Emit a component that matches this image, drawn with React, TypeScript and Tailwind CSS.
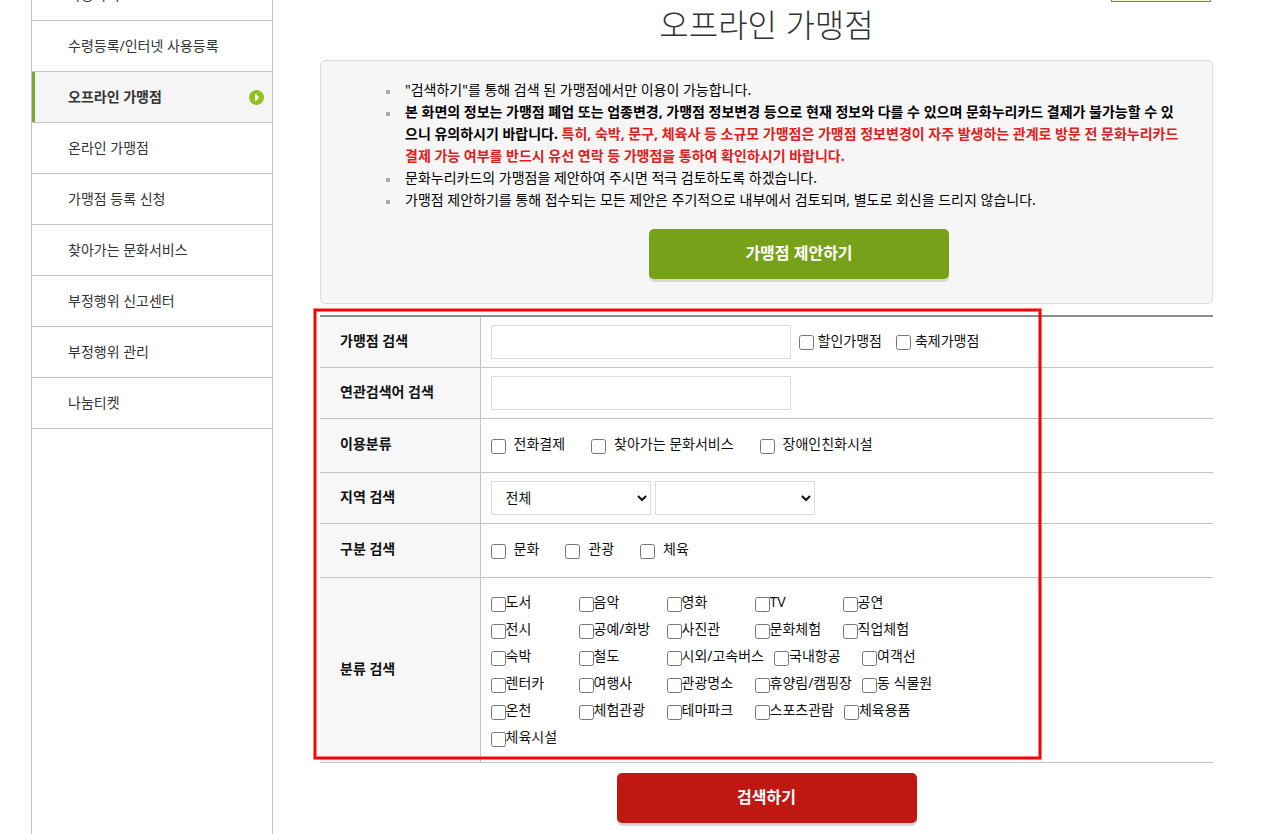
import React from 'react';

const MENU = [
    '사용하기',
    '수령등록/인터넷 사용등록',
    '오프라인 가맹점',
    '온라인 가맹점',
    '가맹점 등록 신청',
    '찾아가는 문화서비스',
    '부정행위 신고센터',
    '부정행위 관리',
    '나눔티켓',
];

const CATEGORIES = [
    ['도서', '음악', '영화', 'TV', '공연'],
    ['전시', '공예/화방', '사진관', '문화체험', '직업체험'],
    ['숙박', '철도', '시외/고속버스', '국내항공', '여객선'],
    ['렌터카', '여행사', '관광명소', '휴양림/캠핑장', '동 식물원'],
    ['온천', '체험관광', '테마파크', '스포츠관람', '체육용품'],
    ['체육시설'],
];

const ArrowBadge = () => (
    <svg viewBox="0 0 15 15" className="h-[15px] w-[15px]" aria-hidden="true">
        <circle cx="7.5" cy="7.5" r="7.5" fill="#8dc21f" />
        <path d="M6 4h1l3.2 3.5L7 11H6z" fill="#fff" />
    </svg>
);

const Check = ({ label, className }: { label: string; className: string }) => (
    <label className={`flex items-center whitespace-nowrap ${className}`}>
        <input type="checkbox" className="mt-1 h-[15px] w-[15px] shrink-0" />
        <span>{label}</span>
    </label>
);

const Row = ({ title, htmlFor, className, children }: { title: string; htmlFor?: string; className: string; children: React.ReactNode }) => (
    <tr className={`border-b border-[#c4c4c4] ${className}`}>
        <th scope="row" className="w-40 border-r border-[#c4c4c4] bg-[#f7f7f7] pb-[2px] pl-5 text-left font-bold">
            {htmlFor ? <label htmlFor={htmlFor}>{title}</label> : title}
        </th>
        <td className="px-[10px]">{children}</td>
    </tr>
);

const Notice = ({ children }: { children: React.ReactNode }) => (
    <li className="flex gap-[15px]">
        <span className="mt-[11px] h-1 w-1 shrink-0 bg-[#aaa]" />
        <div>{children}</div>
    </li>
);

export default function App() {
    return (
        <div className="relative flex h-screen overflow-hidden bg-white pr-[53px] pl-[31px] font-['Noto_Sans','Noto_Sans_CJK_KR',sans-serif] text-sm text-[#111]">
            <nav className="w-[242px] shrink-0 border-x border-[#c4c4c4] text-[#333]">
                <ul className="-mt-[30px]">
                    {MENU.map((item) => {
                        const active = item === '오프라인 가맹점';
                        return (
                            <li key={item} className="h-[51px] border-b border-[#c4c4c4]">
                                <a
                                    href="#"
                                    className={active
                                        ? 'flex h-full items-center justify-between border-l-[3px] border-[#82a736] bg-[#f5f5f5] pr-2 pl-[33px] font-bold'
                                        : 'flex h-full items-center pl-9'}
                                >
                                    <span className="pb-px">{item}</span>
                                    {active && <ArrowBadge />}
                                </a>
                            </li>
                        );
                    })}
                </ul>
            </nav>

            <main className="ml-[47px] min-w-0 flex-1">
                <h1 className="h-[60px] text-center text-[32px] leading-[50px] font-light text-[#333]">오프라인 가맹점</h1>

                <section className="rounded-[5px] border border-[#dcdcdc] bg-[#f6f6f6] pt-[18px] pr-7 pb-6 pl-[65px] text-black">
                    <ul className="list-none leading-[22px] break-all">
                        <Notice>"검색하기"를 통해 검색 된 가맹점에서만 이용이 가능합니다.</Notice>
                        <Notice>
                            <strong className="font-bold">
                                본 화면의 정보는 가맹점 폐업 또는 업종변경, 가맹점 정보변경 등으로 현재 정보와 다를 수 있으며 문화누리카드 결제가 불가능할 수 있으니 유의하시기 바랍니다.{' '}
                                <span className="text-[#e02020]">
                                    특히, 숙박, 문구, 체육사 등 소규모 가맹점은 가맹점 정보변경이 자주 발생하는 관계로 방문 전 문화누리카드 결제 가능 여부를 반드시 유선 연락 등 가맹점을 통하여 확인하시기 바랍니다.
                                </span>
                            </strong>
                        </Notice>
                        <Notice>문화누리카드의 가맹점을 제안하여 주시면 적극 검토하도록 하겠습니다.</Notice>
                        <Notice>가맹점 제안하기를 통해 접수되는 모든 제안은 주기적으로 내부에서 검토되며, 별도로 회신을 드리지 않습니다.</Notice>
                    </ul>
                    <div className="mt-[18px] flex justify-center pl-7">
                        <button type="button" className="h-[50px] w-[300px] rounded-[5px] bg-[#78a11a] pb-[2px] text-base font-bold text-white shadow-[0_3px_0_#d8d8da]">
                            가맹점 제안하기
                        </button>
                    </div>
                </section>

                <form>
                    <table className="mt-[11px] w-full border-collapse border-t-2 border-[#8b908f]">
                        <tbody>
                            <Row title="가맹점 검색" htmlFor="store" className="h-[51px]">
                                <div className="flex items-center">
                                    <input id="store" type="text" className="h-[34px] w-[300px] border border-[#dcdcdc] bg-white px-3" />
                                    <Check label="할인가맹점" className="ml-2 gap-1 pb-[2px]" />
                                    <Check label="축제가맹점" className="ml-[14px] gap-1 pb-[2px]" />
                                </div>
                            </Row>
                            <Row title="연관검색어 검색" htmlFor="keyword" className="h-[51px]">
                                <input id="keyword" type="text" className="block h-[34px] w-[300px] border border-[#dcdcdc] bg-white px-3" />
                            </Row>
                            <Row title="이용분류" className="h-[54px]">
                                <div className="flex gap-[26px] pb-[2px]">
                                    <Check label="전화결제" className="gap-2" />
                                    <Check label="찾아가는 문화서비스" className="gap-2" />
                                    <Check label="장애인친화시설" className="gap-2" />
                                </div>
                            </Row>
                            <Row title="지역 검색" htmlFor="sido" className="h-[51px]">
                                <div className="flex gap-1">
                                    <select id="sido" className="h-[34px] w-[160px] border border-[#dcdcdc] bg-white px-[10px]">
                                        <option>전체</option>
                                    </select>
                                    <select aria-label="시군구" className="h-[34px] w-[160px] border border-[#dcdcdc] bg-white px-[10px]" />
                                </div>
                            </Row>
                            <Row title="구분 검색" className="h-[54px]">
                                <div className="flex gap-[26px] pb-[2px]">
                                    <Check label="문화" className="gap-2" />
                                    <Check label="관광" className="gap-2" />
                                    <Check label="체육" className="gap-2" />
                                </div>
                            </Row>
                            <Row title="분류 검색" className="h-[185px]">
                                {CATEGORIES.map((row) => (
                                    <div key={row[0]} className="flex h-[27px] items-center">
                                        {row.map((name) => (
                                            <Check key={name} label={name} className="min-w-[88px] pr-[10px]" />
                                        ))}
                                    </div>
                                ))}
                            </Row>
                        </tbody>
                    </table>
                    <div className="mt-[10px] flex justify-center">
                        <button type="submit" className="h-[50px] w-[300px] rounded-[5px] bg-[#c11713] pb-[2px] text-base font-bold text-white shadow-[0_3px_0_#d8d8da]">
                            검색하기
                        </button>
                    </div>
                </form>
            </main>

            {/* highlight frame over the search form */}
            <div className="pointer-events-none absolute top-[309px] left-[314px] h-[450px] w-[727px] border-2 border-[#f00] shadow-[0_0_0_1px_#ff000080,inset_0_0_0_1px_#ff000080]" />
            <div className="absolute top-0 right-[55px] h-[2px] w-[100px] border-x border-b border-[#77808a] bg-[#fdf3c8]" />
        </div>
    );
}
